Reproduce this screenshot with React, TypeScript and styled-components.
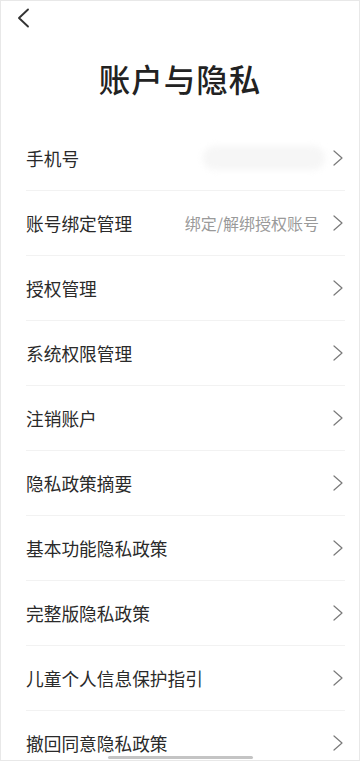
import React from 'react';
import styled, { createGlobalStyle } from 'styled-components';

const GlobalStyle = createGlobalStyle`
  html, body {
    margin: 0;
    padding: 0;
    background: #fff;
  }
  body {
    font-family: "Noto Sans CJK SC", "Noto Sans", sans-serif;
    overflow: hidden;
  }
`;

const Screen = styled.div`
  position: relative;
  width: 360px;
  height: 761px;
  box-sizing: border-box;
  border: 1px solid #e8e8e8;
  background: #fff;
  overflow: hidden;
`;

const TopBar = styled.div`
  height: 33px;
  display: flex;
  align-items: center;
  padding-left: 16px;
`;

const BackButton = styled.button`
  border: none;
  background: none;
  padding: 0;
  display: flex;
  align-items: center;
  cursor: pointer;
`;

const Title = styled.h1`
  margin: 0 0 26px;
  padding-top: 22px;
  height: 44px;
  line-height: 44px;
  text-align: center;
  font-size: 31.5px;
  font-weight: 500;
  color: #222;
  letter-spacing: 1px;
`;

const List = styled.ul`
  list-style: none;
  margin: 0;
  padding: 0 14px 0 25px;
`;

const Row = styled.li`
  height: 65px;
  box-sizing: border-box;
  display: flex;
  align-items: center;
  border-bottom: 1px solid #f2f2f2;
`;

const Label = styled.span`
  flex: 1;
  font-size: 17.7px;
  color: #2a2a2a;
`;

const Hint = styled.span`
  font-size: 16px;
  color: #9a9a9a;
  margin-right: 14px;
`;

const MaskedValue = styled.span`
  width: 122px;
  height: 24px;
  margin-right: 8px;
  border-radius: 12px;
  background: #f6f6f6;
  filter: blur(3px);
`;

const Chevron = styled.svg`
  width: 10px;
  height: 16px;
  margin-right: 2px;
  flex-shrink: 0;
`;

const HomeIndicator = styled.div`
  position: absolute;
  left: 107px;
  bottom: 1px;
  width: 145px;
  height: 3px;
  border-radius: 2px;
  background: #c4c4c4;
`;

type Item = {
  label: string;
  hint?: string;
  masked?: boolean;
};

const items: Item[] = [
  { label: '手机号', masked: true },
  { label: '账号绑定管理', hint: '绑定/解绑授权账号' },
  { label: '授权管理' },
  { label: '系统权限管理' },
  { label: '注销账户' },
  { label: '隐私政策摘要' },
  { label: '基本功能隐私政策' },
  { label: '完整版隐私政策' },
  { label: '儿童个人信息保护指引' },
  { label: '撤回同意隐私政策' },
];

const App: React.FC = () => {
  return (
    <Screen>
      <GlobalStyle />
      <TopBar>
        <BackButton aria-label="返回">
          <svg width="13" height="20" viewBox="0 0 13 20" fill="none">
            <path d="M11 1.5 L2 10 L11 18.5" stroke="#333" strokeWidth="1.9" strokeLinecap="round" strokeLinejoin="round" />
          </svg>
        </BackButton>
      </TopBar>
      <Title>账户与隐私</Title>
      <List>
        {items.map((item) => (
          <Row key={item.label}>
            <Label>{item.label}</Label>
            {item.masked && <MaskedValue />}
            {item.hint && <Hint>{item.hint}</Hint>}
            <Chevron viewBox="0 0 10 16" fill="none">
              <path d="M1 1 L9 8 L1 15" stroke="#7a7a7a" strokeWidth="1.2" strokeLinecap="round" strokeLinejoin="round" />
            </Chevron>
          </Row>
        ))}
      </List>
      <HomeIndicator />
    </Screen>
  );
};

export default App;
